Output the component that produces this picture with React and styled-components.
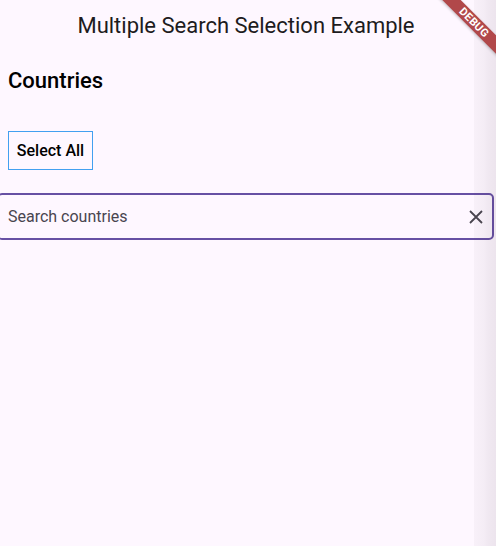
import React, { useState } from 'react';
import styled, { createGlobalStyle } from 'styled-components';

const GlobalStyle = createGlobalStyle`
  html, body {
    margin: 0;
    padding: 0;
    background: #fef7ff;
    font-family: Roboto, "Noto Sans", "Liberation Sans", sans-serif;
  }
  * { box-sizing: border-box; }
`;

const Page = styled.div`
  position: relative;
  width: 496px;
  height: 546px;
  overflow: hidden;
  background: #fef7ff;
`;

const AppBar = styled.header`
  height: 56px;
  display: flex;
  align-items: center;
  justify-content: center;
  padding: 0 4px 6px 0;
  font-size: 22px;
  color: #1d1b20;
`;

const Body = styled.main`
  display: flex;
  flex-direction: column;
`;

const Heading = styled.h2`
  margin: 11px 0 0 8px;
  font-size: 22px;
  font-weight: 500;
  line-height: 28px;
  color: #000;
`;

const SelectButton = styled.button`
  align-self: flex-start;
  margin: 36px 0 0 8px;
  width: 85px;
  height: 39px;
  border: 1px solid #42a0f0;
  background: transparent;
  font-family: inherit;
  font-size: 16px;
  font-weight: 500;
  color: #000;
  padding: 0;
`;

const SearchBox = styled.div`
  margin: 23px 0 0 -3px;
  width: 497px;
  height: 47px;
  border: 2px solid #6750a4;
  border-radius: 5px;
  display: flex;
  align-items: center;
  padding: 0 4px 0 9px;
`;

const SearchInput = styled.input`
  flex: 1;
  border: none;
  outline: none;
  background: transparent;
  font-family: inherit;
  font-size: 16px;
  color: #1d1b20;
  padding: 0;
  &::placeholder { color: #49454f; }
`;

const ClearButton = styled.button`
  border: none;
  background: transparent;
  padding: 0;
  width: 24px;
  height: 24px;
  display: flex;
  align-items: center;
  justify-content: center;
`;

const EdgeShade = styled.div`
  position: absolute;
  top: 0;
  right: 0;
  width: 22px;
  height: 100%;
  pointer-events: none;
  background: linear-gradient(to right,
    rgba(60, 40, 60, 0.03) 0px,
    rgba(60, 40, 60, 0.05) 10px,
    rgba(60, 40, 60, 0.07) 14px,
    rgba(60, 40, 60, 0.09) 22px);
`;

const Banner = styled.div`
  position: absolute;
  top: 16px;
  right: -38px;
  width: 120px;
  height: 13px;
  transform: rotate(45deg);
  background: #b1484a;
  color: #fff;
  font-size: 11px;
  font-weight: 700;
  line-height: 13px;
  letter-spacing: 0.3px;
  text-align: center;
  box-shadow: 0 1px 3px rgba(0, 0, 0, 0.25);
`;

export default function App() {
  const [query, setQuery] = useState('');
  return (
    <Page>
      <GlobalStyle />
      <AppBar>Multiple Search Selection Example</AppBar>
      <Body>
        <Heading>Countries</Heading>
        <SelectButton>Select All</SelectButton>
        <SearchBox>
          <SearchInput
            placeholder="Search countries"
            value={query}
            onChange={(e) => setQuery(e.target.value)}
          />
          <ClearButton onClick={() => setQuery('')}>
            <svg width="14" height="14" viewBox="0 0 14 14">
              <path d="M1 1L13 13M13 1L1 13" stroke="#49454f" strokeWidth="1.8" />
            </svg>
          </ClearButton>
        </SearchBox>
      </Body>
      <EdgeShade />
      <Banner>DEBUG</Banner>
    </Page>
  );
}
